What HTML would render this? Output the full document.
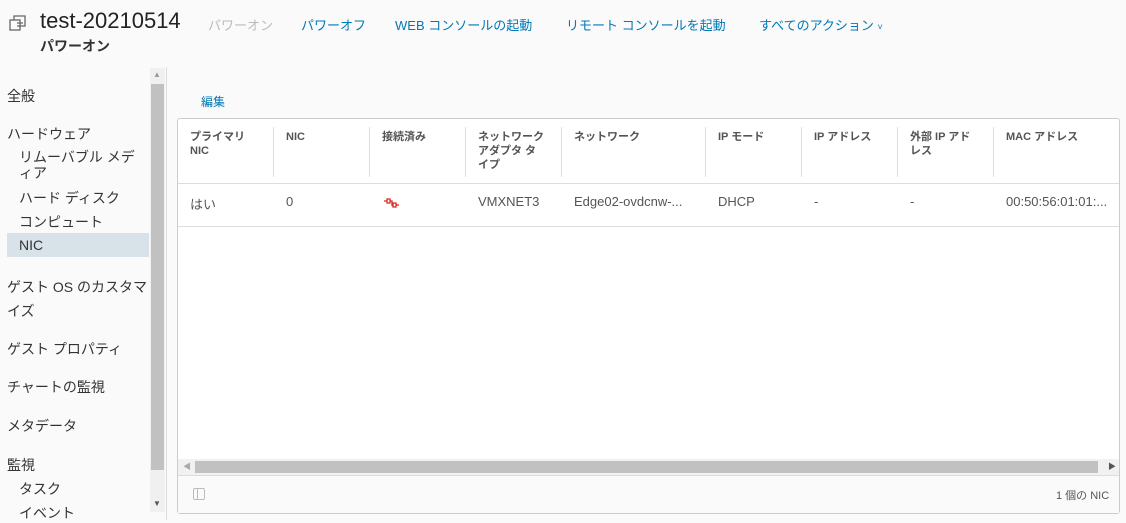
<!DOCTYPE html>
<html><head><meta charset="utf-8"><style>
*{box-sizing:border-box;margin:0;padding:0}
body{width:1126px;height:520px;overflow:hidden;background:#fafafa;font-family:"Liberation Sans","Noto Sans CJK JP",sans-serif;color:#333;position:relative}
.a{position:absolute;white-space:nowrap}
.nav{font-size:13px;color:#0079b8;top:15px}
.side{font-size:14px;color:#333;left:7px}
.sub{left:19px}
th,td{}
.h{font-size:11px;font-weight:bold;color:#555;line-height:14px}
.d{font-size:13px;color:#555}
.sep{position:absolute;top:127px;width:1px;height:50px;background:#ddd}
</style></head><body>
<svg class="a" style="left:8px;top:13px" width="20" height="20" viewBox="0 0 20 20" fill="none" stroke="#666" stroke-width="1.3"><rect x="2" y="7" width="10" height="10"/><path d="M6 7V3h11v10h-5"/><path d="M9 10h6M9 13h3"/></svg>
<div class="a" style="left:40px;top:8px;font-size:22px;color:#222">test-20210514</div>
<div class="a" style="left:40px;top:36px;font-size:14px;font-weight:bold;color:#333">パワーオン</div>
<div class="a nav" style="left:208px;color:#bbb">パワーオン</div>
<div class="a nav" style="left:301px">パワーオフ</div>
<div class="a nav" style="left:395px">WEB コンソールの起動</div>
<div class="a nav" style="left:566px">リモート コンソールを起動</div>
<div class="a nav" style="left:759px">すべてのアクション <span style="font-size:9px">˅</span></div>

<div class="a side" style="top:86px">全般</div>
<div class="a side" style="top:124px">ハードウェア</div>
<div class="a side sub" style="top:149px;white-space:normal;width:125px;line-height:16px">リムーバブル メディア</div>
<div class="a side sub" style="top:188px">ハード ディスク</div>
<div class="a side sub" style="top:212px">コンピュート</div>
<div class="a" style="left:7px;top:233px;width:142px;height:24px;background:#d8e3e9"></div>
<div class="a side sub" style="top:237px">NIC</div>
<div class="a side" style="top:275px;white-space:normal;width:142px;line-height:24px">ゲスト OS のカスタマイズ</div>
<div class="a side" style="top:339px">ゲスト プロパティ</div>
<div class="a side" style="top:377px">チャートの監視</div>
<div class="a side" style="top:416px">メタデータ</div>
<div class="a side" style="top:455px">監視</div>
<div class="a side sub" style="top:479px">タスク</div>
<div class="a side sub" style="top:503px">イベント</div>
<div class="a" style="left:150px;top:68px;width:15px;height:444px;background:#f0f0f0"></div>
<div class="a" style="left:151px;top:84px;width:13px;height:386px;background:#c1c1c1"></div>
<div class="a" style="left:153px;top:70px;font-size:8px;color:#999">▲</div>
<div class="a" style="left:153px;top:499px;font-size:8px;color:#555">▼</div>
<div class="a" style="left:166px;top:67px;width:1px;height:453px;background:#ddd"></div>

<div class="a" style="left:201px;top:93px;font-size:12px;color:#0079b8">編集</div>
<div class="a" style="left:177px;top:118px;width:943px;height:396px;background:#fff;border:1px solid #ccc;border-radius:3px"></div>
<div class="a" style="left:178px;top:183px;width:941px;height:1px;background:#ddd"></div>
<div class="a" style="left:178px;top:226px;width:941px;height:1px;background:#ddd"></div>
<div class="sep" style="left:273px"></div><div class="sep" style="left:369px"></div><div class="sep" style="left:465px"></div><div class="sep" style="left:561px"></div><div class="sep" style="left:705px"></div><div class="sep" style="left:801px"></div><div class="sep" style="left:897px"></div><div class="sep" style="left:993px"></div>
<div class="a h" style="left:190px;top:130px">プライマリ<br>NIC</div>
<div class="a h" style="left:286px;top:130px">NIC</div>
<div class="a h" style="left:382px;top:130px">接続済み</div>
<div class="a h" style="left:478px;top:130px">ネットワーク<br>アダプタ タ<br>イプ</div>
<div class="a h" style="left:574px;top:130px">ネットワーク</div>
<div class="a h" style="left:718px;top:130px">IP モード</div>
<div class="a h" style="left:814px;top:130px">IP アドレス</div>
<div class="a h" style="left:910px;top:130px">外部 IP アド<br>レス</div>
<div class="a h" style="left:1006px;top:130px">MAC アドレス</div>
<div class="a d" style="left:190px;top:194px">はい</div>
<div class="a d" style="left:286px;top:194px">0</div>
<svg class="a" style="left:383px;top:197px" width="20" height="14" viewBox="0 0 20 14" fill="none" stroke="#d52b1e" stroke-width="1.3"><path d="M1 4h3M4 2h3v4H4z"/><path d="M7 4h2v5M9 7h0M9 7h1M10 6h3v4h-3zM13 8h3"/></svg>
<div class="a d" style="left:478px;top:194px">VMXNET3</div>
<div class="a d" style="left:574px;top:194px">Edge02-ovdcnw-...</div>
<div class="a d" style="left:718px;top:194px">DHCP</div>
<div class="a d" style="left:814px;top:194px">-</div>
<div class="a d" style="left:910px;top:194px">-</div>
<div class="a d" style="left:1006px;top:194px">00:50:56:01:01:...</div>
<div class="a" style="left:178px;top:459px;width:941px;height:16px;background:#f1f1f1"></div>
<div class="a" style="left:195px;top:461px;width:903px;height:12px;background:#c1c1c1"></div>
<div class="a" style="left:183px;top:461px;font-size:8px;color:#aaa">◀</div>
<div class="a" style="left:1108px;top:461px;font-size:8px;color:#555">▶</div>
<div class="a" style="left:178px;top:475px;width:941px;height:1px;background:#ddd"></div>
<div class="a" style="left:178px;top:476px;width:941px;height:37px;background:#fafafa"></div>
<div class="a" style="left:193px;top:488px;width:12px;height:12px;border:1px solid #bbb;border-radius:2px"></div>
<div class="a" style="left:197px;top:489px;width:1px;height:10px;background:#bbb"></div>
<div class="a" style="left:1056px;top:487px;font-size:11px;color:#555">1 個の NIC</div>
</body></html>
